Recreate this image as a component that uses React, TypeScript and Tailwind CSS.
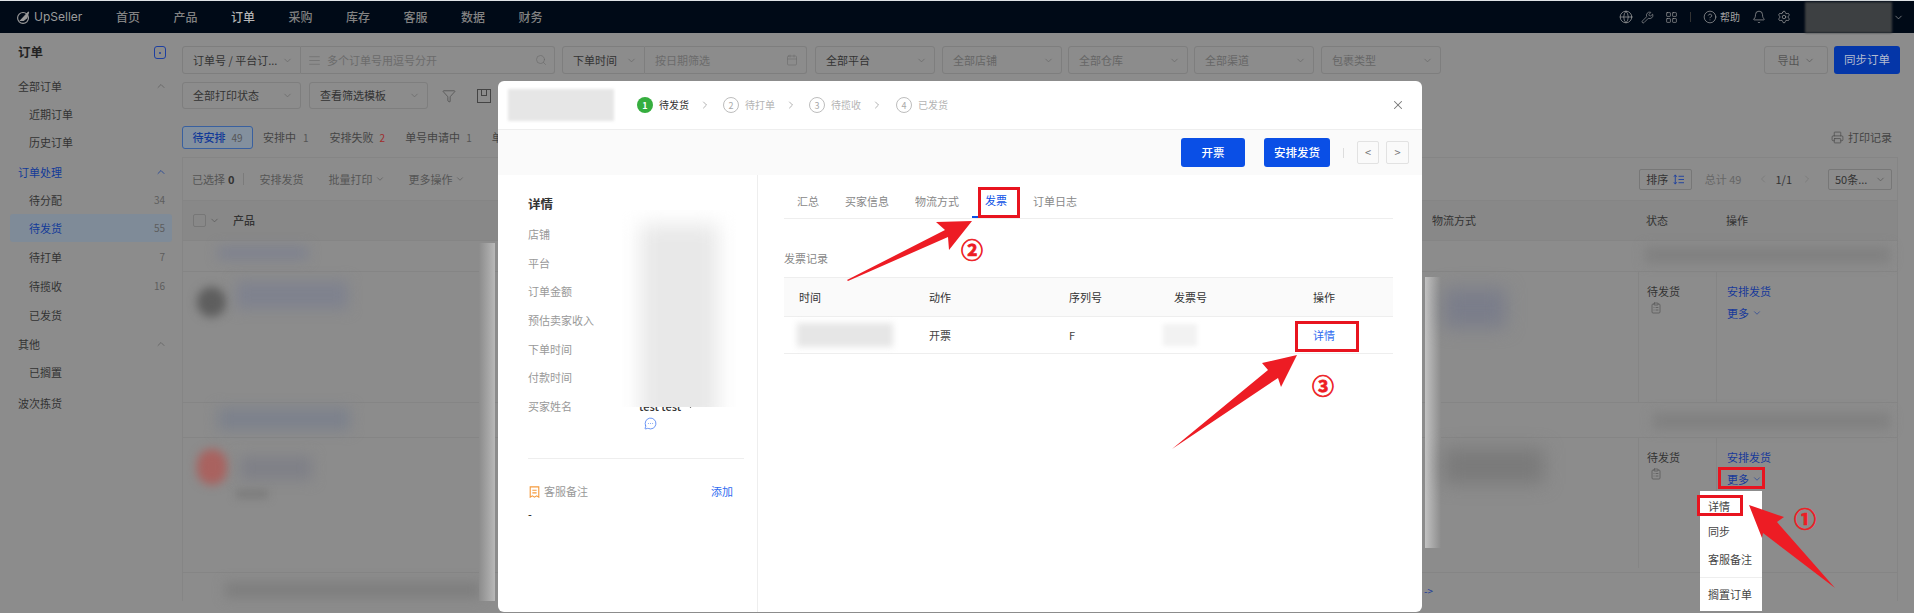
import React from "react";
import { Globe, Wrench, LayoutGrid, CircleHelp, Bell, Settings, Search, Calendar, Funnel, Printer, ChevronDown, ChevronUp, ChevronRight, ChevronLeft, X, AlignJustify, ClipboardList, MessageCircleMore } from "lucide-react";

const NAV = ["首页", "产品", "订单", "采购", "库存", "客服", "数据", "财务"];

function SideRow({ label, className = "", tone = "text-[#333]", count, up, selected }: { label: string; className?: string; tone?: string; count?: string; up?: boolean; selected?: boolean }) {
  return (
    <div className={`flex h-[28px] items-center justify-between rounded-[3px] ${selected ? "bg-[#7f8b98]" : ""} ${className}`}>
      <span className={tone}>{label}</span>
      {count && <span className="text-[10px] text-[#5d5d5d]">{count}</span>}
      {up && <ChevronUp size={12} strokeWidth={1.5} className={tone === "text-[#123a98]" ? "text-[#123a98]" : "text-[#5d5d5d]"} />}
    </div>
  );
}

function Sel({ label, className, dark = false }: { label: string; className: string; dark?: boolean }) {
  return (
    <div className={`flex items-center justify-between rounded-[3px] border border-[#7e7e7e] pl-[10px] pr-[7px] ${className}`}>
      <span className={`whitespace-nowrap ${dark ? "text-[#333]" : "text-[#666]"}`}>{label}</span>
      <ChevronDown size={11} strokeWidth={1.5} className="shrink-0 text-[#666]" />
    </div>
  );
}

function Step({ n, label, active }: { n: number; label: string; active?: boolean }) {
  return (
    <div className="flex items-center">
      {active ? (
        <span className="flex h-[16px] w-[16px] items-center justify-center rounded-full bg-[#36ae3f] text-[9px] font-bold text-white">{n}</span>
      ) : (
        <span className="flex h-[16px] w-[16px] items-center justify-center rounded-full border border-[#bdbdbd] text-[9px] text-[#aaa]">{n}</span>
      )}
      <span className={`ml-[6px] w-[29px] whitespace-nowrap text-[10px] ${active ? "text-[#333]" : "text-[#b4b4b4]"}`}>{label}</span>
    </div>
  );
}

function Info({ label }: { label: string }) {
  return <div className="flex h-[28.7px] items-center text-[#999]">{label}</div>;
}

function OpCell() {
  return (
    <div className="flex flex-col border-r border-[#858585] pl-[10px] pt-[12px]">
      <span className="leading-[14px] text-[#17399a]">安排发货</span>
      <span className="mt-[8px] flex items-center gap-[3px] leading-[14px] text-[#17399a]">
        更多 <ChevronDown size={10} strokeWidth={1.5} />
      </span>
    </div>
  );
}

function StatusCell() {
  return (
    <div className="flex flex-col border-x border-[#858585] pl-[8px] pt-[12px]">
      <span className="leading-[14px] text-[#333]">待发货</span>
      <ClipboardList size={12} strokeWidth={1.5} className="ml-[3px] mt-[4px] text-[#555]" />
    </div>
  );
}

export default function App() {
  return (
    <div className="relative h-[613px] w-[1914px] overflow-hidden bg-[#8c8c8c] font-['Noto_Sans_CJK_SC','Noto_Sans',sans-serif] text-[11px] leading-none">
      {/* Top bar */}
      <header className="flex h-[33px] items-center border-t border-[#dfe3e6] bg-[#000a17] text-[12px] font-medium text-[#828282]">
        <div className="ml-[16px] flex w-[100px] items-center gap-[3px]">
          <svg viewBox="0 0 16 16" className="h-[15px] w-[15px] text-[#9b9b9b]" fill="none" stroke="currentColor" strokeWidth="1.2">
            <circle cx="7.5" cy="8.5" r="5.8" />
            <path d="M5 11 L13.5 2 L11.5 8.5 L8 11 Z" fill="currentColor" />
          </svg>
          <span className="font-['Inter',sans-serif] text-[12px] font-normal text-[#9b9b9b]">UpSeller</span>
        </div>
        <nav className="flex gap-[33.5px]">
          {NAV.map((n) => (
            <span key={n} className={n === "订单" ? "text-[#b5b5b5]" : ""}>{n}</span>
          ))}
        </nav>
        <div className="ml-auto flex items-center text-[#a3a3a3]">
          <Globe size={14} strokeWidth={1.2} />
          <Wrench size={13} strokeWidth={1.2} className="ml-[8px]" />
          <LayoutGrid size={13} strokeWidth={1.2} className="ml-[11px]" />
          <span className="ml-[12px] h-[10px] w-px bg-[#333]" />
          <CircleHelp size={14} strokeWidth={1.2} className="ml-[12px]" />
          <span className="ml-[3px] text-[10px] font-normal">帮助</span>
          <Bell size={14} strokeWidth={1.2} className="ml-[12px]" />
          <Settings size={14} strokeWidth={1.2} className="ml-[11px]" />
          <div className="ml-[14px] h-[31px] w-[87px] bg-[#3d4042] blur-[1px]" />
          <ChevronDown size={11} strokeWidth={1.5} className="ml-[1px] mr-[10px]" />
        </div>
      </header>

      <div className="flex h-[580px]">
        {/* Sidebar */}
        <aside className="w-[182px] shrink-0 pl-[10px] pr-[10px]">
          <div className="flex h-[39px] items-center justify-between pl-[8px] pr-[6px]">
            <span className="text-[12.5px] font-bold text-[#222]">订单</span>
            <span className="flex h-[13px] w-[12px] items-center justify-center rounded-[3px] border border-[#1d3fa0]">
              <span className="h-[2px] w-[2px] rounded-full bg-[#1d3fa0]" />
            </span>
          </div>
          <SideRow label="全部订单" up className="pl-[8px] pr-[5px]" />
          <SideRow label="近期订单" className="pl-[19px] pr-[7px]" />
          <SideRow label="历史订单" className="pl-[19px] pr-[7px]" />
          <SideRow label="订单处理" up tone="text-[#123a98]" className="mt-[2px] pl-[8px] pr-[5px]" />
          <SideRow label="待分配" count="34" className="pl-[19px] pr-[7px]" />
          <SideRow label="待发货" count="55" selected tone="text-[#123a98]" className="pl-[19px] pr-[7px]" />
          <SideRow label="待打单" count="7" className="mt-px pl-[19px] pr-[7px]" />
          <SideRow label="待揽收" count="16" className="mt-px pl-[19px] pr-[7px]" />
          <SideRow label="已发货" className="mt-px pl-[19px] pr-[7px]" />
          <SideRow label="其他" up className="mt-px pl-[8px] pr-[5px]" />
          <SideRow label="已搁置" className="pl-[19px] pr-[7px]" />
          <SideRow label="波次拣货" className="mt-[3px] pl-[8px]" />
        </aside>

        {/* Main */}
        <main className="flex min-w-0 flex-1 flex-col">
          <div className="mt-[13px] flex h-[28px] items-stretch">
            <Sel label="订单号 / 平台订..." dark className="w-[119px] rounded-r-none" />
            <div className="flex w-[254px] items-center rounded-r-[3px] border border-l-0 border-[#7e7e7e] pl-[7px] pr-[7px] text-[#6b6b6b]">
              <AlignJustify size={13} strokeWidth={1.2} />
              <span className="ml-[6px]">多个订单号用逗号分开</span>
              <Search size={12} strokeWidth={1.3} className="ml-auto" />
            </div>
            <Sel label="下单时间" dark className="ml-[7px] w-[83px] rounded-r-none" />
            <div className="flex w-[162px] items-center rounded-r-[3px] border border-l-0 border-[#7e7e7e] pl-[10px] pr-[8px] text-[#6b6b6b]">
              <span>按日期筛选</span>
              <Calendar size={12} strokeWidth={1.2} className="ml-auto" />
            </div>
            <Sel label="全部平台" dark className="ml-[8px] w-[120px]" />
            <Sel label="全部店铺" className="ml-[7px] w-[120px]" />
            <Sel label="全部仓库" className="ml-[6px] w-[120px]" />
            <Sel label="全部渠道" className="ml-[6px] w-[120px]" />
            <Sel label="包裹类型" className="ml-[7px] w-[120px]" />
            <div className="ml-auto flex w-[64px] items-center justify-center gap-[4px] rounded-[3px] border border-[#7e7e7e] text-[#555]">
              导出 <ChevronDown size={11} strokeWidth={1.5} />
            </div>
            <div className="ml-[6px] mr-[14px] flex w-[66px] items-center justify-center rounded-[3px] bg-[#0436a8] text-[11.5px] text-[#b4bcd0]">同步订单</div>
          </div>

          <div className="mt-[8px] flex h-[27px] items-stretch">
            <Sel label="全部打印状态" dark className="w-[119px]" />
            <Sel label="查看筛选模板" dark className="ml-[8px] w-[119px]" />
            <div className="ml-[14px] flex items-center text-[#444]">
              <Funnel size={14} strokeWidth={1.1} />
              <span className="ml-[21px] flex h-[14px] w-[14px] items-start justify-center border border-[#444]">
                <span className="h-[6px] w-[6px] border-x border-b border-[#444]" />
              </span>
            </div>
          </div>

          <div className="mt-[17px] flex h-[23px] items-center">
            <div className="flex h-[23px] w-[71px] items-center justify-center gap-[6px] rounded-[3px] border border-[#39609f] bg-[#83909e]">
              <span className="font-medium text-[#123a98]">待安排</span>
              <span className="text-[10px] text-[#555]">49</span>
            </div>
            <span className="ml-[10px] text-[#444]">安排中</span>
            <span className="ml-[7px] text-[10px] text-[#555]">1</span>
            <span className="ml-[21px] text-[#444]">安排失败</span>
            <span className="ml-[6px] text-[10px] text-[#a02c2c]">2</span>
            <span className="ml-[20px] text-[#444]">单号申请中</span>
            <span className="ml-[6px] text-[10px] text-[#555]">1</span>
            <span className="ml-[20px] text-[#444]">单</span>
            <span className="ml-auto mr-[22px] flex items-center gap-[4px] text-[#444]">
              <Printer size={13} strokeWidth={1.2} />
              打印记录
            </span>
          </div>

          {/* Card */}
          <section className="mr-[16px] mt-[8px] flex h-[444px] flex-col border border-[#858585] border-b-0">
            <div className="flex h-[43px] shrink-0 items-center border-b border-[#858585]">
              <span className="ml-[9px] text-[#555]">已选择</span>
              <span className="ml-[3px] font-bold text-[#333]">0</span>
              <span className="ml-[8px] h-[12px] w-px bg-[#7b7b7b]" />
              <span className="ml-[16px] text-[#555]">安排发货</span>
              <span className="ml-[25px] flex items-center gap-[2px] text-[#555]">批量打印 <ChevronDown size={10} strokeWidth={1.5} /></span>
              <span className="ml-[24px] flex items-center gap-[2px] text-[#555]">更多操作 <ChevronDown size={10} strokeWidth={1.5} /></span>
              <div className="ml-auto flex h-[21px] w-[53px] items-center justify-center gap-[5px] rounded-[2px] border border-[#777] text-[#333]">
                排序
                <svg viewBox="0 0 12 12" className="h-[11px] w-[11px] text-[#1d3fa0]" fill="none" stroke="currentColor" strokeWidth="1">
                  <path d="M2.5 1v10M1 3l1.5-2L4 3M1 9l1.5 2L4 9M6 2.5h6M6 6h6M6 9.500h6" />
                </svg>
              </div>
              <span className="ml-[13px] text-[#666]">总计 49</span>
              <ChevronLeft size={12} strokeWidth={1.5} className="ml-[16px] text-[#777]" />
              <span className="ml-[6px] text-[#333]">1/1</span>
              <ChevronRight size={12} strokeWidth={1.5} className="ml-[9px] text-[#777]" />
              <div className="ml-[15px] mr-[5px] flex h-[21px] w-[64px] items-center justify-between rounded-[2px] border border-[#777] pl-[6px] pr-[5px] text-[#333]">
                50条...
                <ChevronDown size={11} strokeWidth={1.5} className="text-[#555]" />
              </div>
            </div>
            <div className="grid h-[40px] shrink-0 grid-cols-[1241px_214px_79px_181px] items-center border-b border-[#858585] bg-[#888]">
              <div className="flex items-center pl-[10px]">
                <span className="h-[13px] w-[13px] rounded-[2px] border border-[#777]" />
                <ChevronDown size={11} strokeWidth={1.5} className="ml-[3px] text-[#555]" />
                <span className="ml-[13px] font-medium text-[#333]">产品</span>
              </div>
              <span className="pl-[8px] text-[#333]">物流方式</span>
              <span className="pl-[8px] text-[#333]">状态</span>
              <span className="pl-[9px] text-[#333]">操作</span>
            </div>
            <div className="h-[31px] shrink-0 border-b border-[#858585]" />
            <div className="grid h-[130px] shrink-0 grid-cols-[1455px_79px_181px]">
              <div />
              <StatusCell />
              <OpCell />
            </div>
            <div className="h-[36px] shrink-0 border-y border-[#858585]" />
            <div className="grid h-[130px] shrink-0 grid-cols-[1455px_79px_181px]">
              <div />
              <StatusCell />
              <OpCell />
            </div>
            <div className="mt-[4px] flex-1 border-t border-[#858585]" />
          </section>
        </main>
      </div>

      {/* Blurred privacy patches over the table */}
      <div className="absolute left-[218px] top-[246px] h-[14px] w-[90px] bg-[#7f828e] blur-[6px]" />
      <div className="absolute left-[197px] top-[287px] h-[30px] w-[29px] rounded-full bg-[#5e5e5e] blur-[5px]" />
      <div className="absolute left-[236px] top-[281px] h-[28px] w-[112px] bg-[#7f828e] blur-[7px]" />
      <div className="absolute left-[218px] top-[408px] h-[22px] w-[132px] bg-[#7c818c] blur-[7px]" />
      <div className="absolute left-[197px] top-[449px] h-[36px] w-[30px] rounded-full bg-[#a9625f] blur-[5px]" />
      <div className="absolute left-[240px] top-[456px] h-[24px] w-[72px] bg-[#7f8087] blur-[7px]" />
      <div className="absolute left-[236px] top-[490px] h-[8px] w-[32px] bg-[#7a7a7a] blur-[4px]" />
      <div className="absolute left-[225px] top-[582px] h-[16px] w-[255px] bg-[#7e7e7e] blur-[6px]" />
      <div className="absolute left-[479px] top-[243px] h-[358px] w-[16px] bg-gradient-to-r from-[#8c8c8c] to-[#b8b8b8]" />
      <div className="absolute left-[1425px] top-[277px] h-[271px] w-[16px] bg-gradient-to-r from-[#c2c2c2] to-[#8c8c8c]" />
      <div className="absolute left-[1444px] top-[288px] h-[40px] w-[62px] bg-[#7a7d8a] blur-[9px]" />
      <div className="absolute left-[1444px] top-[448px] h-[36px] w-[100px] bg-[#7a7a7a] blur-[9px]" />
      <div className="absolute left-[1645px] top-[247px] h-[16px] w-[245px] bg-[#808080] blur-[6px]" />
      <div className="absolute left-[1653px] top-[413px] h-[16px] w-[237px] bg-[#808080] blur-[6px]" />
      <span className="absolute left-[1424px] top-[586px] text-[10px] text-[#17399a]">-&gt;</span>

      {/* Row action menu */}
      <div className="absolute left-[1700px] top-[491px] flex h-[120px] w-[62px] flex-col bg-white pl-[8px] text-[#444]">
        <div className="flex h-[27px] items-center pt-[4px]">详情</div>
        <div className="flex h-[27px] items-center">同步</div>
        <div className="flex h-[28px] items-center">客服备注</div>
        <div className="-ml-[8px] mt-[4px] h-px bg-[#eee]" />
        <div className="flex h-[32px] items-center">搁置订单</div>
      </div>

      {/* Modal */}
      <div className="absolute left-[498px] top-[81px] flex h-[531px] w-[924px] flex-col overflow-hidden rounded-[6px] bg-white">
        <div className="flex h-[49px] shrink-0 items-center border-b border-[#eeeeee] pl-[10px] pr-[17px]">
          <div className="h-[32px] w-[106px] bg-[#e6e6e6] blur-[1.5px]" />
          <div className="ml-[23px] flex items-center">
            <Step n={1} label="待发货" active />
            <ChevronRight size={12} strokeWidth={1.3} className="ml-[11px] text-[#888]" />
            <div className="ml-[12px]"><Step n={2} label="待打单" /></div>
            <ChevronRight size={12} strokeWidth={1.3} className="ml-[11px] text-[#888]" />
            <div className="ml-[12px]"><Step n={3} label="待揽收" /></div>
            <ChevronRight size={12} strokeWidth={1.3} className="ml-[11px] text-[#888]" />
            <div className="ml-[13px]"><Step n={4} label="已发货" /></div>
          </div>
          <X size={14} strokeWidth={1.8} className="ml-auto text-[#777]" />
        </div>
        <div className="flex h-[45px] shrink-0 items-center justify-end bg-[#fafafa] pr-[13px]">
          <button className="h-[29px] w-[64px] rounded-[3px] bg-[#0a4fe6] text-[11.5px] font-medium text-white">开票</button>
          <button className="ml-[19px] h-[29px] w-[66px] rounded-[3px] bg-[#0a4fe6] text-[11.5px] font-medium text-white">安排发货</button>
          <span className="ml-[13px] h-[10px] w-px bg-[#ddd]" />
          <span className="ml-[13px] flex h-[23px] w-[22px] items-center justify-center rounded-[2px] border border-[#e2e2e2] text-[#777]">&lt;</span>
          <span className="ml-[7px] flex h-[23px] w-[23px] items-center justify-center rounded-[2px] border border-[#e2e2e2] text-[#777]">&gt;</span>
        </div>
        <div className="flex min-h-0 flex-1">
          {/* Details */}
          <div className="relative w-[260px] shrink-0 border-r border-[#eeeeee] pl-[30px] pr-[13px]">
            <div className="flex h-[45px] items-end pb-[10px] text-[12.5px] font-bold text-[#333]">详情</div>
            <Info label="店铺" />
            <Info label="平台" />
            <Info label="订单金额" />
            <Info label="预估卖家收入" />
            <Info label="下单时间" />
            <Info label="付款时间" />
            <div className="flex h-[28.7px] items-center text-[#999]">
              买家姓名
              <span className="ml-[67px] flex items-center gap-[5px] font-medium text-[#333]">test test <ChevronDown size={9} strokeWidth={2} /></span>
            </div>
            <MessageCircleMore size={13} strokeWidth={1.3} className="ml-[116px] -mt-[4px] text-[#2f6bf0]" />
            <div className="mt-[28px] h-px bg-[#eeeeee]" />
            <div className="mt-[27px] flex items-center text-[#999]">
              <svg viewBox="0 0 12 14" className="ml-[1px] h-[12px] w-[11px] text-[#f59a3c]" fill="none" stroke="currentColor" strokeWidth="1.3">
                <path d="M1 1h10v12l-2.5-1.500L6 13l-2.500-1.500L1 13zM3.500 5h5M3.500 8h5" />
              </svg>
              <span className="ml-[4px]">客服备注</span>
              <span className="ml-auto mr-[11px] text-[#2f6bf0]">添加</span>
            </div>
            <div className="mt-[11px] text-black">-</div>
            {/* privacy patch */}
            <div className="absolute left-[120px] top-[35px] h-[197px] w-[119px] overflow-hidden bg-white">
              <div className="ml-[22px] mt-[14px] h-[200px] w-[78px] bg-[#e8e8e8] blur-[10px]" />
            </div>
          </div>

          {/* Invoice tab */}
          <div className="min-w-0 flex-1 pl-[26px] pr-[29px]">
            <div className="flex h-[44px] border-b border-[#eeeeee] pt-[10px] text-[#888]">
              <span className="flex items-center px-[13px]">汇总</span>
              <span className="flex items-center px-[13px]">买家信息</span>
              <span className="flex items-center px-[13px]">物流方式</span>
              <span className="flex items-center border-b-2 border-[#0a4fe6] px-[13px] text-[#0a4fe6]">发票</span>
              <span className="flex items-center px-[13px]">订单日志</span>
            </div>
            <div className="mt-[34px] text-[#888]">发票记录</div>
            <div className="mt-[13px] grid h-[40px] grid-cols-[130px_140px_105px_139px_95px] items-center border-y border-[#eeeeee] bg-[#fafafa] text-[#333]">
              <span className="pl-[15px]">时间</span>
              <span className="pl-[15px]">动作</span>
              <span className="pl-[15px]">序列号</span>
              <span className="pl-[15px]">发票号</span>
              <span className="pl-[15px]">操作</span>
            </div>
            <div className="grid h-[37px] grid-cols-[130px_140px_105px_139px_95px] items-center border-b border-[#eeeeee] text-[#444]">
              <div className="pl-[13px]"><div className="h-[24px] w-[96px] bg-[#e6e6e6] blur-[3px]" /></div>
              <span className="pl-[15px]">开票</span>
              <span className="pl-[15px]">F</span>
              <div className="pl-[4px]"><div className="h-[22px] w-[34px] bg-[#f2f2f2] blur-[2px]" /></div>
              <span className="pl-[15px] text-[#2f6bf0]">详情</span>
            </div>
          </div>
        </div>
      </div>

      {/* Annotations */}
      <svg viewBox="0 0 1914 613" className="pointer-events-none absolute inset-0 h-[613px] w-[1914px]" fill="#ed1c24">
        <polygon points="972,221 936,222 945,230 847,280 848,281 948,237 949,250" />
        <polygon points="1297,355 1262,363 1268,370 1172,449 1278,378 1281,387" />
        <polygon points="1749,505 1784,517 1777,522 1835,588 1763,533 1762,538" />
      </svg>
      <div className="pointer-events-none absolute left-[978px] top-[187px] h-[31px] w-[42px] border-[3px] border-[#e8141f]" />
      <div className="pointer-events-none absolute left-[1295px] top-[321px] h-[31px] w-[64px] border-[3px] border-[#e8141f]" />
      <div className="pointer-events-none absolute left-[1718px] top-[467px] h-[22px] w-[47px] border-[3px] border-[#e8141f]" />
      <div className="pointer-events-none absolute left-[1697px] top-[495px] h-[21px] w-[46px] border-[3px] border-[#e8141f]" />
      <span className="absolute left-[1794px] top-[506px] text-[22px] font-bold text-[#ed1c24] [-webkit-text-stroke:0.7px_#ed1c24]">①</span>
      <span className="absolute left-[961px] top-[237px] text-[22px] font-bold text-[#ed1c24] [-webkit-text-stroke:0.7px_#ed1c24]">②</span>
      <span className="absolute left-[1312px] top-[373px] text-[22px] font-bold text-[#ed1c24] [-webkit-text-stroke:0.7px_#ed1c24]">③</span>
    </div>
  );
}
